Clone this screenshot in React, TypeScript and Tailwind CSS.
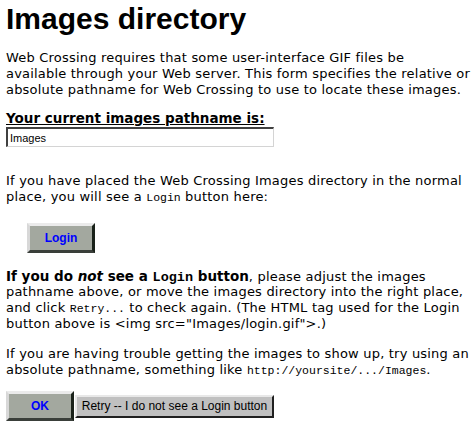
import React from "react";

function ImgButton({ label }: { label: string }) {
  return (
    <div className="flex items-center justify-center w-[68px] h-[30px] bg-[#a3a89f] border-[3px] border-t-[#ebebeb] border-l-[#d8d8d8] border-b-[#3a3f3a] border-r-[#1a221a] text-[#0000ff] font-bold text-[12px] font-['Liberation_Sans',Arial,sans-serif]">
      {label}
    </div>
  );
}

function Line({ children }: { children: React.ReactNode }) {
  return <div className="whitespace-nowrap h-[16px]">{children}</div>;
}

function Mono({ children }: { children: React.ReactNode }) {
  return <span className="text-[11.5px] tracking-normal font-['Liberation_Mono',monospace]">{children}</span>;
}

export default function App() {
  return (
    <div className="bg-white text-black w-[475px] h-[427px] overflow-hidden px-[6px] font-['DejaVu_Sans','Noto_Sans_CJK_JP',sans-serif]">
      <h1 className="text-[30px] font-bold leading-[36px] pt-[1px] m-0 font-['Liberation_Sans',Arial,sans-serif]">
        Images directory
      </h1>
      <div className="text-[13px] tracking-[0.2px] leading-[16px] mt-[13px]">
        <Line>Web Crossing requires that some user-interface GIF files be</Line>
        <Line>available through your Web server. This form specifies the relative or</Line>
        <Line>absolute pathname for Web Crossing to use to locate these images.</Line>
      </div>
      <div className="mt-[12px] text-[13.5px] leading-[16px] font-bold underline whitespace-nowrap">
        Your current images pathname is:
      </div>
      <input
        defaultValue="Images"
        className="block w-[268px] h-[20px] mt-[1px] px-[2px] text-[11px] border-t-2 border-l-2 border-r border-b border-t-[#404040] border-l-[#404040] border-r-[#d4d4d4] border-b-[#d4d4d4] outline-none font-['Liberation_Sans',Arial,sans-serif]"
      />
      <div className="text-[13px] tracking-[0.2px] leading-[16px] mt-[26px]">
        <Line>If you have placed the Web Crossing Images directory in the normal</Line>
        <Line>
          place, you will see a <Mono>Login</Mono> button here:
        </Line>
      </div>
      <div className="mt-[18px] ml-[21px]">
        <ImgButton label="Login" />
      </div>
      <div className="text-[13px] tracking-[0.2px] leading-[16px] mt-[15px]">
        <Line>
          <b className="text-[13.5px] tracking-normal">
            If you do <i>not</i> see a <span className="font-['Liberation_Mono',monospace]">Login</span> button
          </b>
          , please adjust the images
        </Line>
        <Line>pathname above, or move the images directory into the right place,</Line>
        <Line>
          and click <Mono>Retry...</Mono> to check again. (The HTML tag used for the Login
        </Line>
        <Line>button above is &lt;img src="Images/login.gif"&gt;.)</Line>
      </div>
      <div className="text-[13px] tracking-[0.2px] leading-[16px] mt-[14px]">
        <Line>If you are having trouble getting the images to show up, try using an</Line>
        <Line>
          absolute pathname, something like <Mono>http://yoursite/.../Images</Mono>.
        </Line>
      </div>
      <div className="flex items-center mt-[13px] gap-[1px]">
        <ImgButton label="OK" />
        <button className="h-[23px] w-[199px] bg-[#c0c0c0] text-[12px] text-black border-2 border-t-[#e8e8e8] border-l-[#e8e8e8] border-b-[#202020] border-r-[#202020] font-['Liberation_Sans',Arial,sans-serif]">
          Retry -- I do not see a Login button
        </button>
      </div>
    </div>
  );
}
